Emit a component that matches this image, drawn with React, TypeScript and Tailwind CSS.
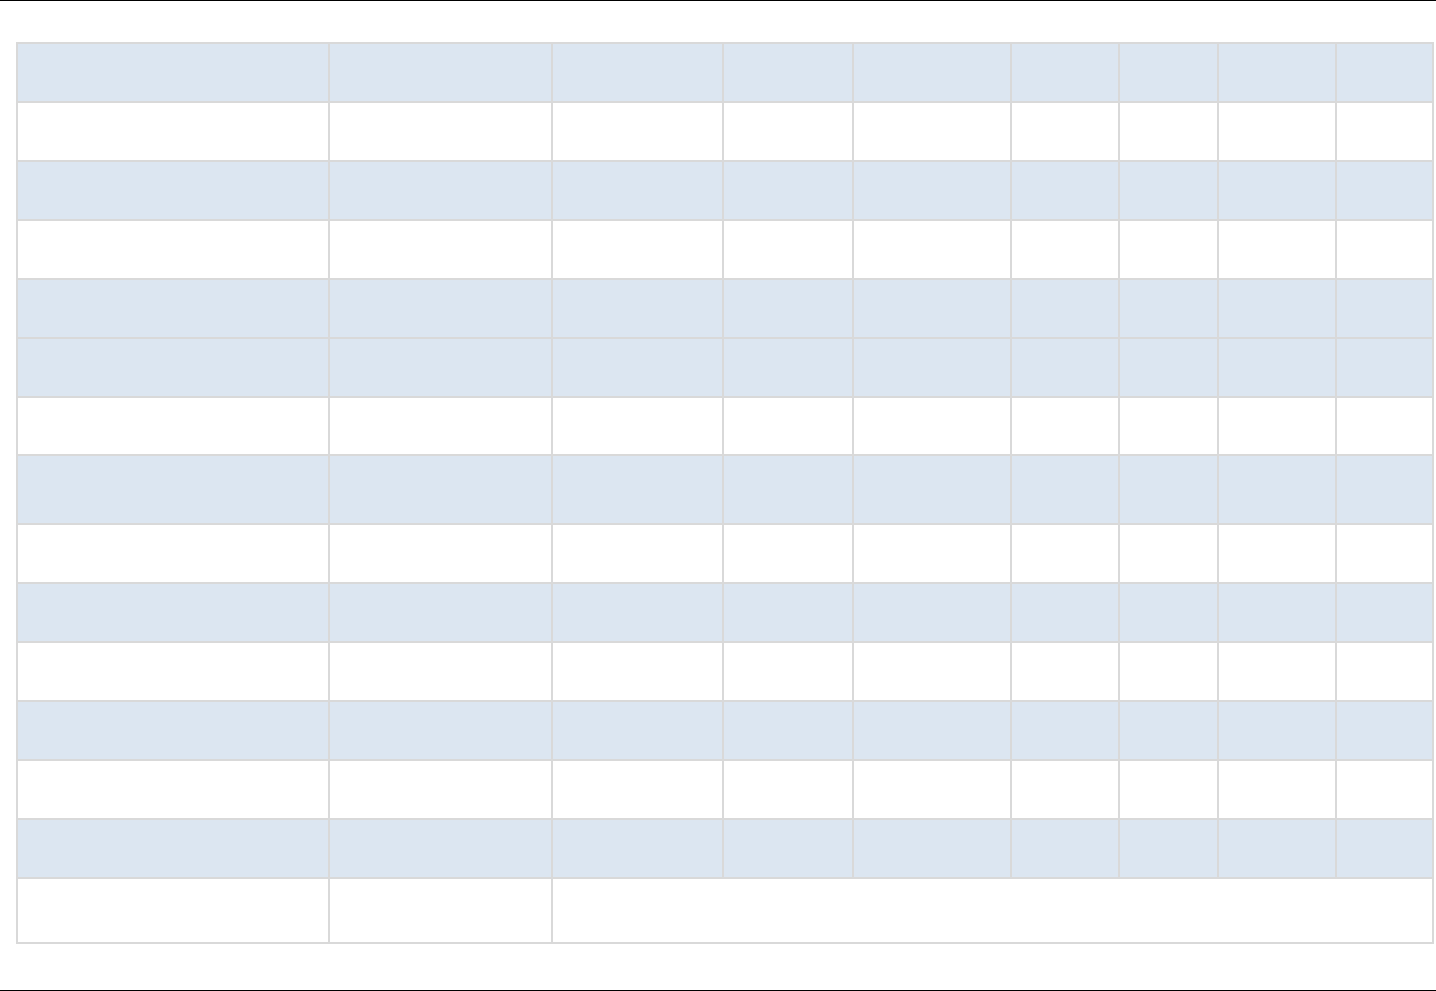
import React from "react";

const rows: { blue: boolean; h: string }[] = [
  { blue: true, h: "h-[59px]" },
  { blue: false, h: "h-[59px]" },
  { blue: true, h: "h-[59px]" },
  { blue: false, h: "h-[59px]" },
  { blue: true, h: "h-[59px]" },
  { blue: true, h: "h-[59px]" },
  { blue: false, h: "h-[58px]" },
  { blue: true, h: "h-[69px]" },
  { blue: false, h: "h-[59px]" },
  { blue: true, h: "h-[59px]" },
  { blue: false, h: "h-[59px]" },
  { blue: true, h: "h-[59px]" },
  { blue: false, h: "h-[59px]" },
  { blue: true, h: "h-[59px]" },
];

export default function App() {
  return (
    <div className="h-[991px] w-full bg-white border-t border-b border-black flex flex-col font-['Liberation_Sans',sans-serif]">
      <div className="pt-[41px] pl-[16px] pr-[2px]">
        <div className="grid grid-cols-[312px_223px_171px_130px_158px_108px_99px_118px_97px] border-r-2 border-b-2 border-[#d9d9d9] w-[1418px]">
          {rows.map((r, i) =>
            Array.from({ length: 9 }).map((_, j) => (
              <div
                key={`${i}-${j}`}
                className={`${r.h} border-l-2 border-t-2 border-[#d9d9d9] ${
                  r.blue ? "bg-[#dce6f1]" : "bg-white"
                }`}
              />
            ))
          )}
          <div className="h-[65px] border-l-2 border-t-2 border-[#d9d9d9] bg-white" />
          <div className="h-[65px] border-l-2 border-t-2 border-[#d9d9d9] bg-white" />
          <div className="col-span-7 h-[65px] border-l-2 border-t-2 border-[#d9d9d9] bg-white" />
        </div>
      </div>
    </div>
  );
}
